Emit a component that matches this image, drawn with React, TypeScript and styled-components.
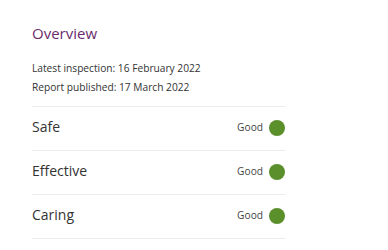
import React from "react";
import styled, { createGlobalStyle } from "styled-components";

const GlobalStyle = createGlobalStyle`
  body {
    margin: 0;
    background: #fff;
    font-family: "Open Sans", "Noto Sans", sans-serif;
    color: #333;
  }
`;

const Page = styled.div`
  width: 253px;
  padding: 22px 0 0 32px;
`;

const Title = styled.h2`
  margin: 0;
  font-size: 15px;
  font-weight: 400;
  line-height: 22px;
  color: #6b2c6e;
`;

const Meta = styled.div`
  margin-top: 15px;
  font-size: 10.2px;
  line-height: 19px;
  color: #333;
`;

const List = styled.div`
  margin-top: 9px;
  border-top: 1px solid #ececec;
`;

const Row = styled.div`
  display: flex;
  align-items: center;
  justify-content: space-between;
  height: 39px;
  padding-bottom: 4px;
  border-bottom: 1px solid #ececec;
`;

const Label = styled.span`
  font-size: 14px;
  color: #333;
`;

const Rating = styled.span`
  display: flex;
  align-items: center;
  gap: 6px;
  font-size: 10.2px;
  color: #444;
`;

const Dot = styled.span<{ $color: string }>`
  width: 16px;
  height: 16px;
  margin-top: 2px;
  border-radius: 50%;
  background: ${(p) => p.$color};
`;

const rows = ["Safe", "Effective", "Caring"];

export default function App() {
  return (
    <>
      <GlobalStyle />
      <Page>
        <Title>Overview</Title>
        <Meta>
          <div>Latest inspection: 16 February 2022</div>
          <div>Report published: 17 March 2022</div>
        </Meta>
        <List>
          {rows.map((r) => (
            <Row key={r}>
              <Label>{r}</Label>
              <Rating>
                Good
                <Dot $color="#5a8f2b" />
              </Rating>
            </Row>
          ))}
        </List>
      </Page>
    </>
  );
}
